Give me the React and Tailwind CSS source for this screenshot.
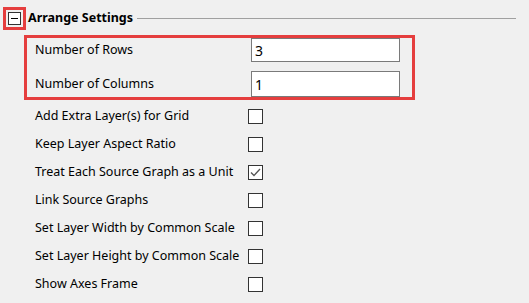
const checks = [
  { label: "Add Extra Layer(s) for Grid", checked: false },
  { label: "Keep Layer Aspect Ratio", checked: false },
  { label: "Treat Each Source Graph as a Unit", checked: true },
  { label: "Link Source Graphs", checked: false },
  { label: "Set Layer Width by Common Scale", checked: false },
  { label: "Set Layer Height by Common Scale", checked: false },
  { label: "Show Axes Frame", checked: false },
];

function CheckBox({ checked }) {
  return (
    <div className="w-[15px] h-[15px] border border-[#333] bg-white flex items-center justify-center">
      {checked && (
        <svg width="11" height="9" viewBox="0 0 11 9">
          <path d="M1 4.5 L4 7.5 L10 1" fill="none" stroke="#555" strokeWidth="1.3" />
        </svg>
      )}
    </div>
  );
}

export default function App() {
  return (
    <div
      className="w-[529px] h-[303px] bg-[#f0f0f0] text-[12.5px] text-black overflow-hidden"
      style={{ fontFamily: '"Noto Sans", "Open Sans", sans-serif' }}
    >
      {/* section header */}
      <div className="flex items-center h-[30px] pt-[6px] pl-[3px] pr-[13px]">
        <div className="border-[3px] border-[#e53e3e] p-[2px] flex items-center">
          <div className="w-[13px] h-[13px] border border-[#333] bg-white flex items-center justify-center">
            <div className="w-[7px] h-px bg-black" />
          </div>
        </div>
        <span className="ml-[2px] font-bold leading-none">Arrange Settings</span>
        <div className="flex-1 h-px bg-[#a0a0a0] ml-[4px] mt-[1px]" />
      </div>

      {/* rows / columns box */}
      <div className="ml-[24px] mt-[5px] w-[391px] border-[3px] border-[#e53e3e]">
        <div className="flex flex-col gap-[9px]">
          <div className="flex items-center h-[24px]">
            <span className="pl-[8px] w-[224px]">Number of Rows</span>
            <div className="w-[149px] h-[24px] border border-[#7a7a7a] bg-white px-[3px] flex items-center text-[14px]">3</div>
          </div>
          <div className="flex items-center h-[26px]">
            <span className="pl-[8px] w-[224px]">Number of Columns</span>
            <div className="w-[149px] h-[26px] border border-[#7a7a7a] bg-white px-[3px] flex items-center text-[14px]">1</div>
          </div>
        </div>
      </div>

      {/* checkbox options */}
      <div className="flex flex-col pl-[35px] pt-[2px]">
        {checks.map((c) => (
          <div key={c.label} className="flex items-center h-[28px]">
            <span className="w-[213px]">{c.label}</span>
            <CheckBox checked={c.checked} />
          </div>
        ))}
      </div>
    </div>
  );
}
